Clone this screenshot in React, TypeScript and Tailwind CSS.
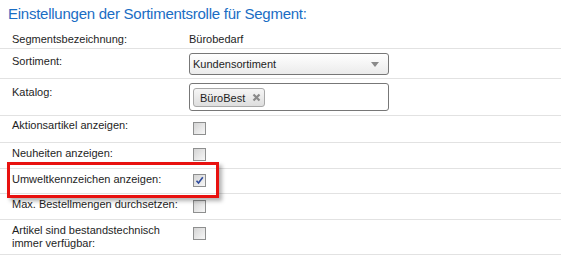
import React from 'react';

type Row = {
  label: string[];
  h: string;
  labelPt: string;
  boxMt: string;
  checked?: boolean;
};

// checkbox rows of the form
const checkRows: Row[] = [
  { label: ['Aktionsartikel anzeigen:'], h: 'h-[27px]', labelPt: 'pt-[3px]', boxMt: 'mt-[6px]' },
  { label: ['Neuheiten anzeigen:'], h: 'h-[26px]', labelPt: 'pt-[4px]', boxMt: 'mt-[5px]' },
  { label: ['Umweltkennzeichen anzeigen:'], h: 'h-[25px]', labelPt: 'pt-[4px]', boxMt: 'mt-[5px]', checked: true },
  { label: ['Max. Bestellmengen durchsetzen:'], h: 'h-[26px]', labelPt: 'pt-[4px]', boxMt: 'mt-[6px]' },
  { label: ['Artikel sind bestandstechnisch', 'immer verfügbar:'], h: 'h-[35px]', labelPt: 'pt-[4px]', boxMt: 'mt-[7px]' },
];

const Checkbox = ({ checked }: { checked?: boolean }) => (
  <div className="w-[13px] h-[13px] border border-[#8e8f8f] bg-gradient-to-br from-[#d4d4d4] to-[#f7f7f7] flex items-center justify-center">
    {checked && (
      <svg width="9" height="9" viewBox="0 0 9 9">
        <path d="M1.5 4.8 L3.5 7 L7.8 1.2" fill="none" stroke="#2d4a9c" strokeWidth="1.6" />
      </svg>
    )}
  </div>
);

const App = () => {
  return (
    <div className="relative w-[571px] h-[261px] bg-white text-[11px] leading-[14px] text-[#1e1e1e] font-['Liberation_Sans',Arial,sans-serif]">
      <h1 className="h-[28px] pl-[8px] pt-[4px] text-[15px] leading-[19px] tracking-[-0.25px] text-[#1a6dc4]">
        Einstellungen der Sortimentsrolle für Segment:
      </h1>

      <div className="w-[561px]">
        <div className="flex h-[21px] border-b border-[#e2e2e2]">
          <div className="w-[189px] pl-[12px] pt-[4px]">Segmentsbezeichnung:</div>
          <div className="pt-[4px]">Bürobedarf</div>
        </div>

        <div className="flex h-[30px] border-b border-[#e2e2e2]">
          <div className="w-[189px] pl-[12px] pt-[5px]">Sortiment:</div>
          <div className="mt-[4px] w-[200px] h-[22px] border border-[#777] rounded-[3px] bg-gradient-to-b from-white to-[#ebebeb] flex items-center justify-between pl-[3px] pr-[9px]">
            <span>Kundensortiment</span>
            <span className="w-0 h-0 border-l-[4px] border-r-[4px] border-t-[5px] border-l-transparent border-r-transparent border-t-[#8a8a8a]" />
          </div>
        </div>

        <div className="flex h-[37px] border-b border-[#e2e2e2]">
          <div className="w-[189px] pl-[12px] pt-[6px]">Katalog:</div>
          <div className="mt-[4px] w-[200px] h-[28px] border border-[#777] rounded-[3px] bg-white pl-[3px] pt-[4px]">
            <div className="inline-flex items-center h-[19px] w-[72px] border border-[#a8a8a8] rounded-[3px] bg-gradient-to-b from-[#f6f6f6] to-[#dedede] pl-[6px] gap-[7px]">
              <span>BüroBest</span>
              <svg width="9" height="9" viewBox="0 0 9 9">
                <path d="M1.5 1.5 L7.5 7.5 M7.5 1.5 L1.5 7.5" stroke="#8a8a8a" strokeWidth="2.2" />
              </svg>
            </div>
          </div>
        </div>

        {checkRows.map((row) => (
          <div key={row.label[0]} className={`flex ${row.h} border-b border-[#e2e2e2]`}>
            <div className={`w-[189px] shrink-0 pl-[12px] whitespace-nowrap leading-[13px] ${row.labelPt}`}>
              {row.label.map((line) => (
                <div key={line}>{line}</div>
              ))}
            </div>
            <div className={`ml-[4px] ${row.boxMt}`}>
              <Checkbox checked={row.checked} />
            </div>
          </div>
        ))}
      </div>

      {/* red highlight annotation */}
      <div className="absolute left-[7px] top-[162px] w-[212px] h-[36px] border-[3px] border-[#e8110f] shadow-[3px_3px_4px_rgba(0,0,0,0.3)]" />
    </div>
  );
};

export default App;
